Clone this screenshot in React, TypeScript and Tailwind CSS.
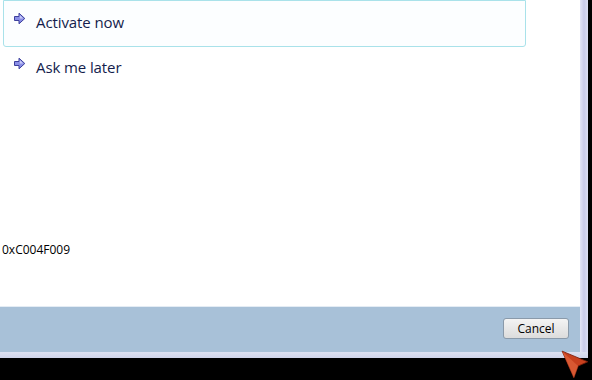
import React from "react";

const LinkArrow = () => (
  <svg width="13" height="13" viewBox="0 0 13 13" className="shrink-0 mb-[8px]">
    <path
      d="M1.5 4.5 H6 V1.2 L11.8 6.5 L6 11.8 V8.5 H1.5 Z"
      fill="#8a8ee6"
      stroke="#3c3f9c"
      strokeWidth="1"
      strokeLinejoin="round"
    />
    <path d="M6.8 3 L10.2 6.5 L6.8 6.5 Z" fill="#c9cbf6" />
  </svg>
);

const Cursor = () => (
  <svg width="32" height="32" viewBox="0 0 30 30">
    <path d="M2 2 L26 12 L17 16 L13 27 Z" fill="#c8401e" stroke="#7a1f0c" strokeWidth="0.8" />
    <path d="M2 2 L17 16 L13 27 Z" fill="#e0623a" opacity="0.7" />
  </svg>
);

const CommandLink = ({ label, active }: { label: string; active?: boolean }) => (
  <div
    className={`flex items-center gap-[10px] pl-[9px] h-[47px] pb-[3px] ${
      active ? "border border-[#a9e2ea] rounded-b-[3px] bg-[#fcfeff]" : "border border-transparent -mt-[2px]"
    }`}
  >
    <LinkArrow />
    <span className="text-[15px] text-[#141d4c] tracking-[-0.1px]">{label}</span>
  </div>
);

export default function App() {
  return (
    <div
      className="w-[592px] h-[380px] bg-black flex flex-col overflow-hidden relative"
      style={{ fontFamily: '"Open Sans", "Noto Sans", sans-serif' }}
    >
      <div className="flex h-[352px]">
        <div className="w-[580px] flex flex-col">
          <div className="h-[306px] bg-white flex flex-col">
            <div className="pl-[3px] w-[526px]">
              <CommandLink label="Activate now" active />
              <CommandLink label="Ask me later" />
            </div>
            <div className="mt-auto mb-[47px] pl-[2px] text-[12px] text-black">0xC004F009</div>
          </div>
          <div className="h-[1px] bg-[#e4ecf4]" />
          <div className="flex-1 bg-[#a8c1d8] flex justify-end items-start pt-[11px] pr-[11px]">
            <button className="w-[66px] h-[21px] rounded-[3px] border border-[#8a9aaa] bg-gradient-to-b from-[#f4f4f4] to-[#dcdcdc] text-[12px] text-black leading-none">
              Cancel
            </button>
          </div>
        </div>
        <div className="w-[8px] bg-gradient-to-r from-[#e4e6f6] via-[#c9cbe9] to-[#dcdff2]" />
        <div className="flex-1 bg-black" />
      </div>
      <div className="flex h-[6px]">
        <div className="w-[588px] bg-gradient-to-b from-[#dde1f1] to-[#cfd4ea]" />
        <div className="flex-1 bg-black" />
      </div>
      <div className="absolute left-[560px] top-[349px]">
        <Cursor />
      </div>
    </div>
  );
}
